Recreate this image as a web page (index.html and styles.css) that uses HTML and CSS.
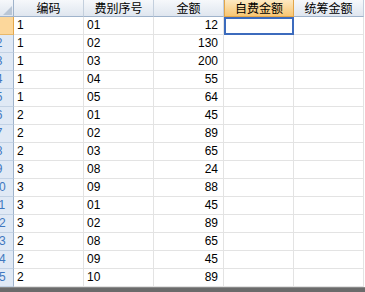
FILE: index.html
```html
<!DOCTYPE html>
<html>
<head>
<meta charset="utf-8">
<link rel="stylesheet" href="styles.css">
</head>
<body>
<div class="sheet">
  <div class="grid">
    <div class="hc corner"><span class="tri"></span></div>
    <div class="hc">编码</div>
    <div class="hc">费别序号</div>
    <div class="hc">金额</div>
    <div class="hc sel">自费金额</div>
    <div class="hc">统筹金额</div>

    <div class="rh rsel"><span>1</span></div><div class="c">1</div><div class="c">01</div><div class="c num">12</div><div class="c cur"></div><div class="c"></div>
    <div class="rh"><span>2</span></div><div class="c">1</div><div class="c">02</div><div class="c num">130</div><div class="c"></div><div class="c"></div>
    <div class="rh"><span>3</span></div><div class="c">1</div><div class="c">03</div><div class="c num">200</div><div class="c"></div><div class="c"></div>
    <div class="rh"><span>4</span></div><div class="c">1</div><div class="c">04</div><div class="c num">55</div><div class="c"></div><div class="c"></div>
    <div class="rh"><span>5</span></div><div class="c">1</div><div class="c">05</div><div class="c num">64</div><div class="c"></div><div class="c"></div>
    <div class="rh"><span>6</span></div><div class="c">2</div><div class="c">01</div><div class="c num">45</div><div class="c"></div><div class="c"></div>
    <div class="rh"><span>7</span></div><div class="c">2</div><div class="c">02</div><div class="c num">89</div><div class="c"></div><div class="c"></div>
    <div class="rh"><span>8</span></div><div class="c">2</div><div class="c">03</div><div class="c num">65</div><div class="c"></div><div class="c"></div>
    <div class="rh"><span>9</span></div><div class="c">3</div><div class="c">08</div><div class="c num">24</div><div class="c"></div><div class="c"></div>
    <div class="rh"><span>10</span></div><div class="c">3</div><div class="c">09</div><div class="c num">88</div><div class="c"></div><div class="c"></div>
    <div class="rh"><span>11</span></div><div class="c">3</div><div class="c">01</div><div class="c num">45</div><div class="c"></div><div class="c"></div>
    <div class="rh"><span>12</span></div><div class="c">3</div><div class="c">02</div><div class="c num">89</div><div class="c"></div><div class="c"></div>
    <div class="rh"><span>13</span></div><div class="c">2</div><div class="c">08</div><div class="c num">65</div><div class="c"></div><div class="c"></div>
    <div class="rh"><span>14</span></div><div class="c">2</div><div class="c">09</div><div class="c num">45</div><div class="c"></div><div class="c"></div>
    <div class="rh"><span>15</span></div><div class="c">2</div><div class="c">10</div><div class="c num">89</div><div class="c"></div><div class="c"></div>
  </div>
  <div class="fill"></div>
  <div class="bar"></div>
</div>
</body>
</html>
```

FILE: styles.css
```css
html, body {
  margin: 0;
  padding: 0;
  background: #ffffff;
}
.sheet {
  width: 365px;
  height: 292px;
  display: flex;
  flex-direction: column;
  overflow: hidden;
  font-family: "Liberation Sans", "Noto Sans CJK SC", sans-serif;
  font-size: 12px;
  color: #000;
}
.grid {
  display: grid;
  grid-template-columns: 14px repeat(5, 70px);
  grid-template-rows: 17px repeat(15, 18px);
}
.grid > div {
  box-sizing: border-box;
  overflow: hidden;
  white-space: nowrap;
}
.hc {
  background: linear-gradient(#f6f8fb, #dfe6ef);
  border-right: 1px solid #c3cfdd;
  border-bottom: 1px solid #9fb3cb;
  font-family: "Noto Sans CJK SC", sans-serif;
  font-size: 12px;
  line-height: 16px;
  text-align: center;
  color: #000;
}
.hc.sel {
  background: linear-gradient(#fde9c2, #f8c672);
  border: 1px solid #e3a64a;
  border-top: none;
  line-height: 16px;
}
.corner {
  position: relative;
  border-right: 1px solid #9fb3cb;
}
.tri {
  position: absolute;
  right: 1px;
  bottom: 1px;
  width: 0;
  height: 0;
  border-left: 9px solid transparent;
  border-bottom: 9px solid #b9c6d6;
}
.rh {
  background: #e0e9f5;
  border-right: 1px solid #9fb3cb;
  border-bottom: 1px solid #c3d2e4;
  color: #3f78c0;
  font-family: "Liberation Sans", sans-serif;
  font-size: 12px;
  line-height: 17px;
}
.rh span {
  display: block;
  width: 26px;
  margin-left: -14px;
  text-align: center;
}
.rh.rsel {
  background: #fcd79b;
  border-right: 1px solid #e3a64a;
  border-bottom: 1px solid #e8b86a;
  color: transparent;
}
.c {
  border-right: 1px solid #e3e3e3;
  border-bottom: 1px solid #e3e3e3;
  line-height: 17px;
  padding: 0 3px;
}
.num {
  text-align: right;
  padding-right: 5px;
}
.cur {
  border: 2px solid #3c6bbd;
}
.fill {
  flex: 1;
}
.bar {
  height: 5px;
  background: #6b6b6b;
  border-top: 1px solid #8a8a8a;
}
```
